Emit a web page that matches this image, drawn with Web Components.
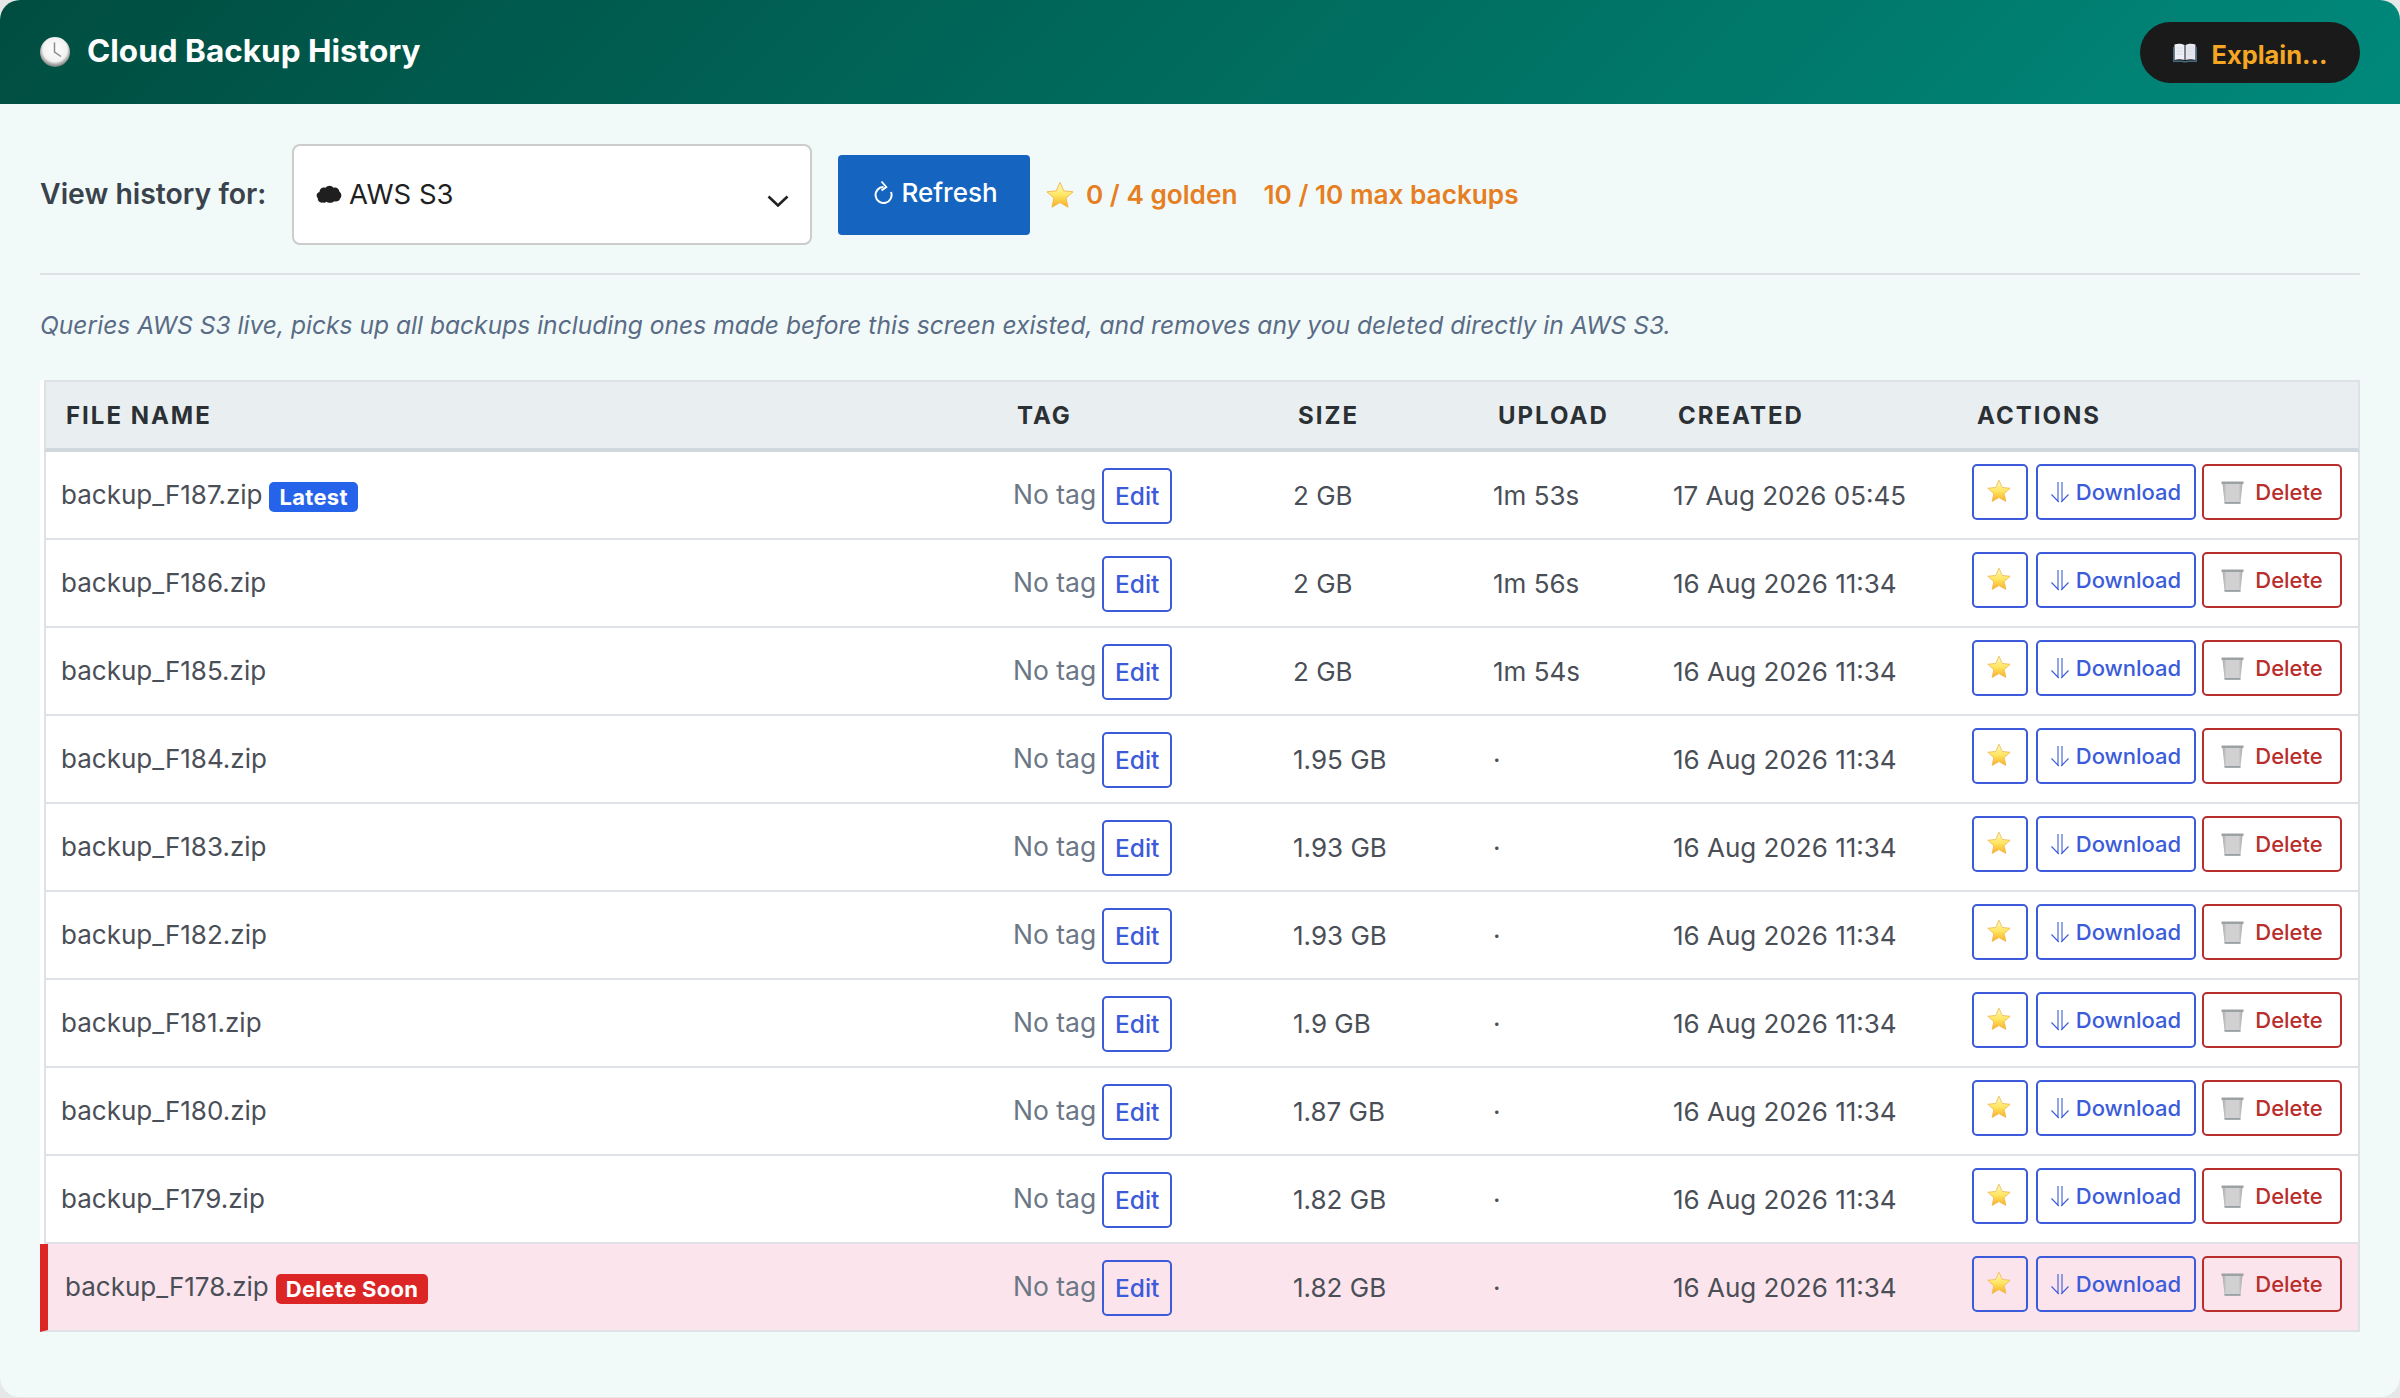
<!DOCTYPE html>
<html>
<head>
<meta charset="utf-8">
<title>Cloud Backup History</title>
<style>
  html, body { margin: 0; height: 100%; background: #e6e8e8; font-family: Inter, "Liberation Sans", sans-serif; }
</style>
</head>
<body>
<backup-panel></backup-panel>

<script>
const ICONS = {
  clock: `<svg width="30" height="30" viewBox="0 0 30 30"><defs><radialGradient id="c" cx=".5" cy=".42" r=".56"><stop offset="0" stop-color="#fff"/><stop offset=".72" stop-color="#f1f1f1"/><stop offset=".86" stop-color="#b5b5b5"/><stop offset="1" stop-color="#7f8483"/></radialGradient></defs><circle cx="15" cy="15" r="15" fill="url(#c)"/><path d="M14.500 5.500V15l6.500 4.500" fill="none" stroke="#8b8b8b" stroke-width="1.500"/></svg>`,
  book: `<svg width="24" height="20" viewBox="0 0 24 20"><path d="M1.500 1.500c3-1 7-1 10 .5v15c-3-1-7-1-10 0z" fill="#eef0f7"/><path d="M12.500 2c3-1.500 7-1.500 10-.5v15.500c-3-1-7-1-10 0z" fill="#e4e6f0"/><path d="M0 4v15h9.500c.5.800 4.500.800 5 0H24V4h-1.300v13.500h-8.500c-1 .7-3.400.7-4.400 0H1.300V4z" fill="#47697f"/><path d="M3.500 5h6M3.500 8h6M3.500 11h6M14.500 5h6M14.500 8h6M14.500 11h6" stroke="#d3d6e2" stroke-width=".8"/></svg>`,
  cloud: `<svg width="26" height="20" viewBox="0 0 26 20" style="display:block"><path d="M7 18.500c-3 .8-5.500-1.500-5.200-4.200C-.5 12 .8 8.500 3.500 8 3.300 5 6.500 2.500 9.500 3.800c2-2.800 6.200-2.800 8 0 3-1 5.500 1 6 4 2.200 1.500 2.500 5 .7 6.700-.6 2.300-3.700 3.800-6 2.700-2 2-6 2-7.700.6-1 .8-2.500 1.100-3.500.7z" fill="#1f1f1f"/></svg>`,
  chevron: `<svg width="22" height="12" viewBox="0 0 22 12"><path d="M1.500 1.500 11 10.500l9.500-9" fill="none" stroke="#222" stroke-width="2.600"/></svg>`,
  refresh: `<svg width="19" height="24" viewBox="0 0 19 24" style="margin-top:-5px"><path d="M17 12A8 8 0 1 1 9.500 7" fill="none" stroke="#fff" stroke-width="2"/><path d="M7.500 1.500 12.300 7l-4.800 3.500" fill="none" stroke="#fff" stroke-width="1.900"/></svg>`,
  down: `<svg width="18" height="21" viewBox="0 0 18 21"><path d="M7 0v20M11 0v20M.5 12.500 7.800 20M17.500 12.500 10.200 20" fill="none" stroke="#3b5bdb" stroke-width="1.100"/></svg>`,
  trash: `<svg width="23" height="23" viewBox="0 0 23 23"><defs><pattern id="m" width="2" height="2" patternUnits="userSpaceOnUse"><rect width="2" height="2" fill="#e6e6e6"/><path d="M0 0l2 2M2 0L0 2" stroke="#b0b0b0" stroke-width=".4"/></pattern><linearGradient id="e" x1="0" x2="1" y1="0" y2="0"><stop offset="0" stop-color="#777" stop-opacity=".45"/><stop offset=".2" stop-color="#777" stop-opacity="0"/><stop offset=".8" stop-color="#777" stop-opacity="0"/><stop offset="1" stop-color="#777" stop-opacity=".45"/></linearGradient></defs><path d="M1.500 2h20l-2 19.500c0 .8-1 1.200-1.500 1.200H5c-.5 0-1.500-.4-1.500-1.200z" fill="url(#m)"/><path d="M1.500 2h20l-2 19.500c0 .8-1 1.200-1.500 1.200H5c-.5 0-1.500-.4-1.500-1.200z" fill="url(#e)"/><path d="M.5 .5h22V3H.5z" fill="#9ca1a3"/><path d="M3.500 21h16v1.800h-16z" fill="#9aa0a3"/></svg>`
};

// gradient ids are per shadow root, so the same star markup can repeat
function star(size) {
  return `<svg width="${size}" height="${size}" viewBox="0 0 24 24"><defs><linearGradient id="s" x1="0" y1="0" x2="0" y2="1"><stop offset="0" stop-color="#fff8cc"/><stop offset=".5" stop-color="#ffe661"/><stop offset="1" stop-color="#f6ae28"/></linearGradient></defs><path d="M12 1.200l3.200 7.200 8 .9-6 5.300 1.700 7.900-6.900-4-6.900 4 1.700-7.900-6-5.300 8-.9z" fill="url(#s)" stroke="#f0b84a" stroke-width=".8" stroke-linejoin="round"/></svg>`;
}

const BACKUPS = [
  { name: "backup_F187.zip", size: "2 GB", upload: "1m 53s", created: "17 Aug 2026 05:45", badge: "Latest" },
  { name: "backup_F186.zip", size: "2 GB", upload: "1m 56s", created: "16 Aug 2026 11:34" },
  { name: "backup_F185.zip", size: "2 GB", upload: "1m 54s", created: "16 Aug 2026 11:34" },
  { name: "backup_F184.zip", size: "1.95 GB", upload: "·", created: "16 Aug 2026 11:34" },
  { name: "backup_F183.zip", size: "1.93 GB", upload: "·", created: "16 Aug 2026 11:34" },
  { name: "backup_F182.zip", size: "1.93 GB", upload: "·", created: "16 Aug 2026 11:34" },
  { name: "backup_F181.zip", size: "1.9 GB", upload: "·", created: "16 Aug 2026 11:34" },
  { name: "backup_F180.zip", size: "1.87 GB", upload: "·", created: "16 Aug 2026 11:34" },
  { name: "backup_F179.zip", size: "1.82 GB", upload: "·", created: "16 Aug 2026 11:34" },
  { name: "backup_F178.zip", size: "1.82 GB", upload: "·", created: "16 Aug 2026 11:34", badge: "Delete Soon", old: true }
];

const COLUMNS = "281px 200px 180px 299px 1fr";

class PanelHeader extends HTMLElement {
  connectedCallback() {
    this.attachShadow({mode: "open"}).innerHTML = `
      <style>
        :host {
          display: flex;
          align-items: center;
          justify-content: space-between;
          height: 104px;
          padding: 0 40px;
          background: linear-gradient(135deg, #004d40, #00897b);
        }
        .title { display: flex; align-items: center; gap: 17px; color: #fff; font-size: 31.500px; font-weight: 700; }
        .title svg { display: block; }
        .title span { margin-top: -3px; }
        button {
          display: flex;
          align-items: center;
          gap: 15px;
          width: 220px;
          height: 61px;
          margin-top: 1px;
          justify-content: center;
          border: 0;
          border-radius: 31px;
          background: #1a1a1a;
          color: #f5a623;
          font: 700 25.400px Inter, sans-serif;
        }
        button span { margin-top: 3px; }
      </style>
      <div class="title">${ICONS.clock}<span>Cloud Backup History</span></div>
      <button>${ICONS.book}<span>Explain...</span></button>
    `;
  }
}

class HistoryToolbar extends HTMLElement {
  connectedCallback() {
    this.attachShadow({mode: "open"}).innerHTML = `
      <style>
        :host {
          display: flex;
          align-items: center;
          height: 171px;
          box-sizing: border-box;
          border-bottom: 2px solid #dee2e6;
          padding-bottom: 30px;
          padding-top: 42px;
          font-size: 27.500px;
        }
        label { font-weight: 600; font-size: 28.400px; color: #3a424b; width: 252px; flex: none; margin-top: -2px; }
        .select {
          display: flex;
          align-items: center;
          flex: none;
          box-sizing: border-box;
          width: 520px;
          height: 101px;
          padding: 0 21px 0 22px;
          border: 2px solid #ccc;
          border-radius: 8px;
          background: #fff;
          color: #1f1f1f;
          margin-right: 26px;
        }
        .select .cloud { margin-right: 7px; margin-top: -2px; }
        .select .label { margin-top: -1px; }
        .select .arrow { display: block; margin-left: auto; margin-top: 4px; }
        button {
          display: flex;
          align-items: center;
          justify-content: center;
          gap: 8px;
          flex: none;
          box-sizing: border-box;
          width: 192px;
          height: 80px;
          padding: 0 0 0 4px;
          border: 0;
          border-radius: 4px;
          background: #1565c0;
          color: #fff;
          font: 500 26px Inter, sans-serif;
          margin-right: 16px;
        }
        button span { margin-top: -4px; }
        .stats { display: flex; align-items: center; gap: 26px; color: #e67e22; font-size: 26.200px; font-weight: 600; }
        .stats span { display: flex; align-items: center; gap: 12px; }
      </style>
      <label>View history for:</label>
      <div class="select"><span class="cloud">${ICONS.cloud}</span><span class="label">AWS S3</span><span class="arrow">${ICONS.chevron}</span></div>
      <button>${ICONS.refresh}<span>Refresh</span></button>
      <div class="stats"><span>${star(28)}0 / 4 golden</span><span>10 / 10 max backups</span></div>
    `;
  }
}

class BackupRow extends HTMLElement {
  connectedCallback() {
    const d = this.data;
    const badge = d.badge ? `<span class="badge">${d.badge}</span>` : "";
    this.attachShadow({mode: "open"}).innerHTML = `
      <style>
        :host {
          display: grid;
          grid-template-columns: 951px ${COLUMNS};
          align-items: center;
          box-sizing: border-box;
          height: 88px;
          border-left: 2px solid #dee2e6;
          border-right: 2px solid #dee2e6;
          border-bottom: 2px solid #dee2e6;
          background: #fff;
          color: #4a4f57;
          font-size: 26px;
        }
        :host([old]) {
          grid-template-columns: 949px ${COLUMNS};
          background: #fce4ec;
          border-left: 8px solid #dc2626;
          margin-left: -4px;
        }
        .cell { padding-left: 15px; display: flex; align-items: center; }
        :host([old]) .name { padding-left: 17px; }
        .name { gap: 7px; }
        .name > span:first-child { margin-top: -1px; }
        .badge { margin-top: 3px; padding: 0 10px; line-height: 30px; border-radius: 5px; background: #2563eb; color: #fff; font-size: 22px; font-weight: 700; letter-spacing: .3px; }
        :host([old]) .badge { background: #dc2626; }
        .tag { color: #6b7785; gap: 6px; padding-left: 16px; font-size: 26.500px; }
        .tag > span { margin-top: -2px; }
        button {
          display: flex;
          align-items: center;
          justify-content: center;
          box-sizing: border-box;
          height: 56px;
          border: 2px solid #3b5bdb;
          border-radius: 5px;
          background: transparent;
          color: #3b5bdb;
          padding: 0;
          font: 500 22px Inter, sans-serif;
        }
        .edit { width: 70px; margin-top: 2px; font-size: 24.500px; }
        .actions { gap: 6px; margin-top: -6px; }
        .gold { width: 56px; margin-right: 2px; }
        .gold svg { margin-top: -2px; margin-left: -3px; }
        .dl { width: 160px; gap: 7px; }
        .del { width: 140px; gap: 11px; color: #b92d2d; border-color: #b92d2d; }
      </style>
      <div class="cell name"><span>${d.name}</span>${badge}</div>
      <div class="cell tag"><span>No tag</span><button class="edit">Edit</button></div>
      <div class="cell">${d.size}</div>
      <div class="cell">${d.upload}</div>
      <div class="cell">${d.created}</div>
      <div class="cell actions">
        <button class="gold">${star(24)}</button>
        <button class="dl">${ICONS.down}<span>Download</span></button>
        <button class="del">${ICONS.trash}<span>Delete</span></button>
      </div>
    `;
  }
}

class BackupTable extends HTMLElement {
  connectedCallback() {
    const root = this.attachShadow({mode: "open"});
    root.innerHTML = `
      <style>
        :host { display: block; padding-left: 4px; background: #fff; }
        .head {
          display: grid;
          grid-template-columns: 951px ${COLUMNS};
          align-items: center;
          box-sizing: border-box;
          height: 72px;
          border: 2px solid #dee2e6;
          border-bottom: 4px solid #cfd8dc;
          background: #e9eef1;
          color: #2b3035;
          font-size: 24px;
          font-weight: 700;
          letter-spacing: 2px;
        }
        .head span { padding-left: 20px; }
      </style>
      <div class="head"><span>FILE NAME</span><span>TAG</span><span>SIZE</span><span>UPLOAD</span><span>CREATED</span><span>ACTIONS</span></div>
      <slot></slot>
    `;
    BACKUPS.forEach(b => {
      const row = document.createElement("backup-row");
      row.data = b;
      if (b.old) row.setAttribute("old", "");
      this.appendChild(row);
    });
  }
}

class BackupPanel extends HTMLElement {
  connectedCallback() {
    this.attachShadow({mode: "open"}).innerHTML = `
      <style>
        :host {
          display: block;
          height: 1397px;
          border-radius: 20px;
          overflow: hidden;
          background: #f1faf9;
        }
        main { padding: 0 40px; }
        .note { margin: 0; padding: 34px 0 39px; font-size: 24.600px; font-style: italic; color: #5a6b85; line-height: 32px; }
      </style>
      <panel-header></panel-header>
      <main>
        <history-toolbar></history-toolbar>
        <p class="note">Queries AWS S3 live, picks up all backups including ones made before this screen existed, and removes any you deleted directly in AWS S3.</p>
        <backup-table></backup-table>
      </main>
    `;
  }
}

customElements.define("panel-header", PanelHeader);
customElements.define("history-toolbar", HistoryToolbar);
customElements.define("backup-row", BackupRow);
customElements.define("backup-table", BackupTable);
customElements.define("backup-panel", BackupPanel);
</script>
</body>
</html>
